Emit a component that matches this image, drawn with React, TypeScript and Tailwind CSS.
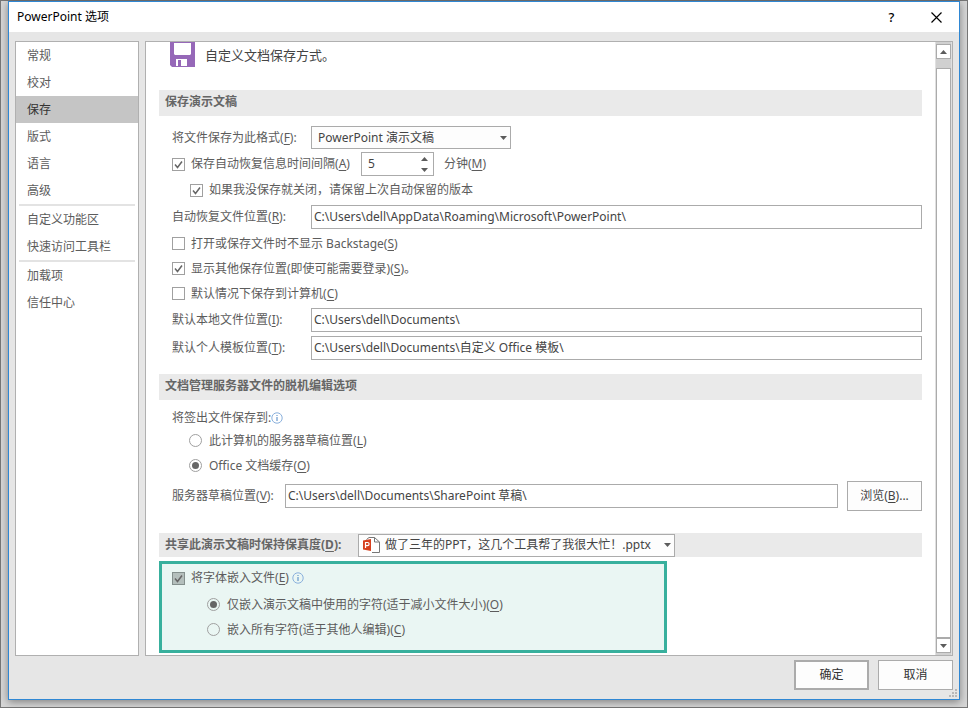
import { useState } from 'react'
import type { ReactNode } from 'react'

const NAV_GROUPS = [
  ['常规', '校对', '保存', '版式', '语言', '高级'],
  ['自定义功能区', '快速访问工具栏'],
  ['加载项', '信任中心'],
]

const FIELD = 'h-6 min-w-0 flex-1 border border-[#ababab] bg-white px-[2px] pb-[2px] text-[#444] outline-none focus:border-[#777]'

function Key({ children }: { children: string }) {
  return <>(<span className="underline underline-offset-2">{children}</span>)</>
}

function SectionTitle({ children }: { children: ReactNode }) {
  return <h2 className="flex h-[26px] items-center bg-[#eaeaea] px-[6px] pb-[2px] font-bold text-[#666]">{children}</h2>
}

function Check({ id, checked, onChange, muted, children }: {
  id: string
  checked: boolean
  onChange: (v: boolean) => void
  muted?: boolean
  children: ReactNode
}) {
  return (
    <div className="flex items-center gap-[6px]">
      <span className="relative h-[13px] w-[13px] shrink-0">
        <input
          id={id}
          type="checkbox"
          checked={checked}
          onChange={e => onChange(e.target.checked)}
          className={`block h-[13px] w-[13px] appearance-none border ${muted ? 'border-[#84908d] bg-[#b4bfbc]' : 'border-[#a0a0a0] bg-white'}`}
        />
        {checked && (
          <svg className="pointer-events-none absolute inset-0" width="13" height="13" viewBox="0 0 13 13">
            <path d="M3 6.5l2.500 3L10 3.500" fill="none" stroke="#666" strokeWidth="1.500" />
          </svg>
        )}
      </span>
      <label htmlFor={id}>{children}</label>
    </div>
  )
}

function Radio({ id, name, checked, onSelect, children }: {
  id: string
  name: string
  checked: boolean
  onSelect: () => void
  children: ReactNode
}) {
  return (
    <div className="flex h-[25px] items-center gap-[7px]">
      <span className="relative h-[13px] w-[13px] shrink-0">
        <input
          id={id}
          type="radio"
          name={name}
          checked={checked}
          onChange={onSelect}
          className="block h-[13px] w-[13px] appearance-none rounded-full border border-[#a0a0a0]"
        />
        {checked && <span className="pointer-events-none absolute inset-[3px] rounded-full bg-[#666]" />}
      </span>
      <label htmlFor={id}>{children}</label>
    </div>
  )
}

function PathRow({ id, label, accessKey, value }: { id: string; label: string; accessKey: string; value: string }) {
  return (
    <div className="flex h-7 items-center pl-[13px]">
      <label htmlFor={id} className="w-[139px] shrink-0">{label}<Key>{accessKey}</Key>:</label>
      <input id={id} type="text" defaultValue={value} className={FIELD} />
    </div>
  )
}

function Caret({ up }: { up?: boolean }) {
  return (
    <svg width="7" height="4" viewBox="0 0 7 4">
      <path d={up ? 'M0 4h7L3.500 0z' : 'M0 0h7L3.500 4z'} fill="#5c5c5c" />
    </svg>
  )
}

function InfoIcon() {
  return (
    <svg width="12" height="12" viewBox="0 0 12 12" className="shrink-0">
      <circle cx="6" cy="6" r="5.200" fill="none" stroke="#8ab0dc" strokeWidth="1" />
      <path d="M5.500 3h1v1h-1zM5.500 5h1v4h-1z" fill="#4a83c4" />
    </svg>
  )
}

function SaveIcon() {
  return (
    <svg width="25" height="25" viewBox="0 0 25 25" className="shrink-0">
      <path d="M0 0h25v25H2l-2-2z" fill="#9668b8" />
      <path d="M4 1h17v11l-1 1H5l-1-1z" fill="#fff" />
      <path d="M6 17h11v7H6z" fill="#fff" />
      <path d="M8 18h3v6H8z" fill="#9668b8" />
    </svg>
  )
}

function PptIcon() {
  return (
    <svg width="17" height="16" viewBox="0 0 17 16">
      <path d="M4 3V0.500h8l4.500 4v11H4V13" fill="#fff" />
      <path d="M3.500 2.500L6 0.500h5.500l5 4.500v10.500H9M11.500 0.500V5h5" fill="none" stroke="#777" />
      <path d="M0 3.500L8 2v12l-8-1.500z" fill="#d6401f" />
      <path d="M2.500 11V5.500h2a1.500 1.500 0 010 3.200h-2" fill="none" stroke="#fff" strokeWidth="1.200" />
    </svg>
  )
}

export default function App() {
  const [page, setPage] = useState('保存')
  const [autoRecover, setAutoRecover] = useState(true)
  const [minutes, setMinutes] = useState(5)
  const [keepLast, setKeepLast] = useState(true)
  const [hideBackstage, setHideBackstage] = useState(false)
  const [showOther, setShowOther] = useState(true)
  const [saveLocal, setSaveLocal] = useState(false)
  const [draft, setDraft] = useState('cache')
  const [embed, setEmbed] = useState(true)
  const [embedMode, setEmbedMode] = useState('used')

  return (
    <div className="flex min-h-screen flex-col border border-[#777] bg-[#d6d6d6] px-[7px] pb-[7px] font-['Noto_Sans','Noto_Sans_CJK_SC',sans-serif] text-[12px] leading-[18px] text-[#5c5c5c]">
      <div className="relative flex flex-1 flex-col border border-[#2f87d3] bg-[#e6e6e6] shadow-[0_2px_8px_rgba(0,0,0,0.4)]">
        {/* Title bar */}
        <header className="flex h-[30px] items-center bg-white pl-2 text-black">
          <h1 className="flex-1">PowerPoint 选项</h1>
          <button type="button" aria-label="帮助" className="w-[45px] text-[13px] font-medium">?</button>
          <button type="button" aria-label="关闭" className="flex w-[45px] justify-center">
            <svg width="11" height="11" viewBox="0 0 11 11">
              <path d="M0.500 0.500l10 10M10.500 0.500l-10 10" stroke="#000" strokeWidth="1.200" />
            </svg>
          </button>
        </header>

        <div className="flex flex-1 gap-[6px] px-[6px] pt-[9px]">
          {/* Category list */}
          <nav className="w-[124px] shrink-0 border border-[#b0b0b0] bg-white">
            {NAV_GROUPS.map((group, i) => (
              <div key={i}>
                {i > 0 && <div className="mx-[3px] h-[2px] bg-[#e3e3e3]" />}
                {group.map(item => (
                  <button
                    key={item}
                    type="button"
                    onClick={() => setPage(item)}
                    className={`block h-[27px] w-full pl-[11px] text-left ${page === item ? 'bg-[#c5c5c5] text-[#333]' : 'hover:bg-[#e6e6e6]'}`}
                  >
                    {item}
                  </button>
                ))}
              </div>
            ))}
          </nav>

          <main className="flex min-w-0 flex-1 border border-[#b0b0b0] bg-white">
            <form className="min-w-0 flex-1 pr-[13px] pb-[2px] pl-[13px]">
              <div className="flex h-12 items-start gap-[10px] pl-[11px]">
                <SaveIcon />
                <p className="pt-1 text-[13px] text-[#444]">自定义文档保存方式。</p>
              </div>

              <SectionTitle>保存演示文稿</SectionTitle>
              <div className="pt-2">
                <div className="flex h-[27px] items-center pl-[13px]">
                  <label htmlFor="format" className="w-[139px] shrink-0">将文件保存为此格式<Key>F</Key>:</label>
                  <div className="relative w-[200px]">
                    <select id="format" className="block h-[23px] w-full appearance-none border border-[#ababab] bg-[#fdfdfd] pr-5 pl-[6px] text-[#444] outline-none">
                      <option>PowerPoint 演示文稿</option>
                      <option>PowerPoint 97-2003 演示文稿</option>
                    </select>
                    <span className="pointer-events-none absolute inset-y-0 right-1 flex items-center"><Caret /></span>
                  </div>
                </div>
                <div className="flex h-[26px] items-center pl-[13px]">
                  <Check id="auto" checked={autoRecover} onChange={setAutoRecover}>保存自动恢复信息时间间隔<Key>A</Key></Check>
                  <div className="mr-[10px] ml-[11px] flex h-6 w-[73px] border border-[#ababab] bg-white">
                    <input
                      id="minutes"
                      type="text"
                      inputMode="numeric"
                      value={minutes}
                      onChange={e => setMinutes(Number(e.target.value) || 0)}
                      className="min-w-0 flex-1 pl-[6px] text-[#444] outline-none"
                    />
                    <div className="flex w-4 flex-col">
                      <button type="button" aria-label="增加" onClick={() => setMinutes(minutes + 1)} className="flex flex-1 items-center justify-center"><Caret up /></button>
                      <button type="button" aria-label="减少" onClick={() => setMinutes(Math.max(1, minutes - 1))} className="flex flex-1 items-center justify-center"><Caret /></button>
                    </div>
                  </div>
                  <label htmlFor="minutes">分钟<Key>M</Key></label>
                </div>
                <div className="flex h-[26px] items-center pl-[31px]">
                  <Check id="keep" checked={keepLast} onChange={setKeepLast}>如果我没保存就关闭，请保留上次自动保留的版本</Check>
                </div>
                <PathRow id="recover-path" label="自动恢复文件位置" accessKey="R" value={'C:\\Users\\dell\\AppData\\Roaming\\Microsoft\\PowerPoint\\'} />
                <div className="flex h-[25px] items-center pl-[13px]">
                  <Check id="backstage" checked={hideBackstage} onChange={setHideBackstage}>打开或保存文件时不显示 Backstage<Key>S</Key></Check>
                </div>
                <div className="flex h-[25px] items-center pl-[13px]">
                  <Check id="other" checked={showOther} onChange={setShowOther}>显示其他保存位置(即使可能需要登录)<Key>S</Key>。</Check>
                </div>
                <div className="flex h-[25px] items-center pl-[13px]">
                  <Check id="local" checked={saveLocal} onChange={setSaveLocal}>默认情况下保存到计算机<Key>C</Key></Check>
                </div>
                <PathRow id="local-path" label="默认本地文件位置" accessKey="I" value={'C:\\Users\\dell\\Documents\\'} />
                <PathRow id="template-path" label="默认个人模板位置" accessKey="T" value={'C:\\Users\\dell\\Documents\\自定义 Office 模板\\'} />
              </div>

              <div className="mt-3">
                <SectionTitle>文档管理服务器文件的脱机编辑选项</SectionTitle>
                <div className="pt-2">
                  <p className="flex h-5 items-center pl-[13px]">将签出文件保存到:<InfoIcon /></p>
                  <div className="pl-[30px]">
                    <Radio id="draft-server" name="draft" checked={draft === 'server'} onSelect={() => setDraft('server')}>此计算机的服务器草稿位置<Key>L</Key></Radio>
                    <Radio id="draft-cache" name="draft" checked={draft === 'cache'} onSelect={() => setDraft('cache')}>Office 文档缓存<Key>O</Key></Radio>
                  </div>
                  <div className="flex h-9 items-center pl-[13px]">
                    <label htmlFor="draft-path" className="w-[113px] shrink-0">服务器草稿位置<Key>V</Key>:</label>
                    <input id="draft-path" type="text" defaultValue={'C:\\Users\\dell\\Documents\\SharePoint 草稿\\'} className={FIELD} />
                    <button type="button" className="ml-[9px] h-[30px] w-[75px] border border-[#ababab] bg-[#fdfdfd] text-[#444]">浏览<Key>B</Key>...</button>
                  </div>
                </div>
              </div>

              <div className="mt-[19px] flex h-6 items-center bg-[#eaeaea] pl-[6px]">
                <label htmlFor="deck" className="w-[193px] shrink-0 font-bold text-[#666]">共享此演示文稿时保持保真度<Key>D</Key>:</label>
                <div className="relative w-[317px]">
                  <select id="deck" className="block h-[23px] w-full appearance-none border border-[#ababab] bg-[#fdfdfd] pr-5 pl-[26px] text-[#444] outline-none">
                    <option>做了三年的PPT，这几个工具帮了我很大忙！.pptx</option>
                  </select>
                  <span className="pointer-events-none absolute inset-y-0 left-[5px] flex items-center"><PptIcon /></span>
                  <span className="pointer-events-none absolute inset-y-0 right-1 flex items-center"><Caret /></span>
                </div>
              </div>

              {/* Font embedding */}
              <div className="mt-1 w-[508px] max-w-full border-[3px] border-[#38b09d] bg-[#eaf6f3] pb-2 pl-[10px]">
                <div className="flex h-7 items-center gap-[3px]">
                  <Check id="embed" checked={embed} onChange={setEmbed} muted>将字体嵌入文件<Key>E</Key></Check>
                  <InfoIcon />
                </div>
                <div className="pl-[35px]">
                  <Radio id="embed-used" name="embed-mode" checked={embedMode === 'used'} onSelect={() => setEmbedMode('used')}>仅嵌入演示文稿中使用的字符(适于减小文件大小)<Key>O</Key></Radio>
                  <Radio id="embed-all" name="embed-mode" checked={embedMode === 'all'} onSelect={() => setEmbedMode('all')}>嵌入所有字符(适于其他人编辑)<Key>C</Key></Radio>
                </div>
              </div>
            </form>

            {/* Scroll bar */}
            <div className="flex w-[17px] shrink-0 flex-col border-x border-[#e0e0e0] bg-[#d0d0d0] pt-[2px] pb-[2px]">
              <button type="button" aria-label="向上滚动" className="flex h-[15px] items-center justify-center border border-[#ababab] bg-white"><Caret up /></button>
              <div className="mt-[9px] flex-1 border border-[#ababab] bg-white" />
              <button type="button" aria-label="向下滚动" className="flex h-[15px] items-center justify-center border border-[#ababab] bg-white"><Caret /></button>
            </div>
          </main>
        </div>

        <footer className="flex justify-end gap-[9px] px-[6px] pt-1 pb-[9px]">
          <button type="button" className="h-[30px] w-[75px] border-2 border-[#ababab] bg-[#fdfdfd] text-[#333]">确定</button>
          <button type="button" className="h-[30px] w-[75px] border border-[#ababab] bg-[#fdfdfd] text-[#333]">取消</button>
        </footer>

        <svg className="absolute right-[2px] bottom-[2px]" width="8" height="8" viewBox="0 0 8 8" fill="#b8b8b8">
          <path d="M6 0h2v2H6zM3 3h2v2H3zM6 3h2v2H6zM0 6h2v2H0zM3 6h2v2H3zM6 6h2v2H6z" />
        </svg>
      </div>
    </div>
  )
}
